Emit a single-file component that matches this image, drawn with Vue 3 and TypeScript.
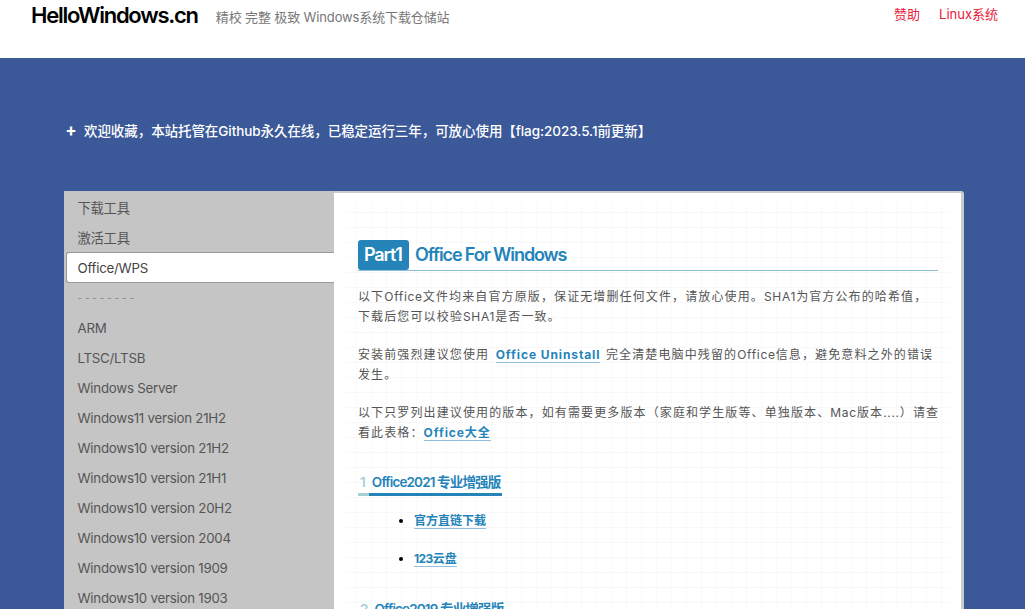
<script setup lang="ts">
const navItems: string[] = [
  '下载工具', '激活工具', 'Office/WPS', '- - - - - - - -', 'ARM', 'LTSC/LTSB', 'Windows Server',
  'Windows11 version 21H2', 'Windows10 version 21H2', 'Windows10 version 21H1',
  'Windows10 version 20H2', 'Windows10 version 2004', 'Windows10 version 1909', 'Windows10 version 1903',
]
</script>

<template>
  <div class="page">
    <header class="top">
      <div class="brand">
        <a class="logo">HelloWindows.cn</a>
        <span class="slogan">精校 完整 极致 Windows系统下载仓储站</span>
      </div>
      <nav class="links">
        <a>赞助</a>
        <a>Linux系统</a>
      </nav>
    </header>
    <main class="hero">
      <p class="notice"><span class="plus">✚</span>欢迎收藏，本站托管在Github永久在线，已稳定运行三年，可放心使用【flag:2023.5.1前更新】</p>
      <section class="panel">
        <aside class="side">
          <a
            v-for="item in navItems"
            :key="item"
            class="item"
            :class="{ active: item === 'Office/WPS', sep: item.startsWith('-') }"
          >{{ item }}</a>
        </aside>
        <article class="content">
          <div class="grid">
            <h2 class="part"><span class="tag">Part1</span><span class="ptitle">Office For Windows</span></h2>
            <p>以下<span class="en">Office</span>文件均来自官方原版，保证无增删任何文件，请放心使用。<span class="en">SHA1</span>为官方公布的哈希值，<br>下载后您可以校验<span class="en">SHA1</span>是否一致。</p>
            <p>安装前强烈建议您使用 <a class="lnk inl">Office Uninstall</a> 完全清楚电脑中残留的<span class="en">Office</span>信息，避免意料之外的错误发生。</p>
            <p>以下只罗列出建议使用的版本，如有需要更多版本（家庭和学生版等、单独版本、<span class="en">Mac</span>版本<span class="en">....</span>）请查看此表格：<a class="lnk">Office大全</a></p>
            <h3 class="sub"><span class="num">1</span><span class="stitle">Office2021 专业增强版</span></h3>
            <ul>
              <li><a class="lnk small">官方直链下载</a></li>
              <li><a class="lnk small"><span class="tight">123</span>云盘</a></li>
            </ul>
            <h3 class="sub"><span class="num">2</span><span class="stitle">Office2019 专业增强版</span></h3>
          </div>
        </article>
      </section>
    </main>
  </div>
</template>

<style>
html, body { margin: 0; overflow: hidden; background: #fff; }
</style>

<style scoped>
.page {
  height: 609px;
  overflow: hidden;
  font-family: Inter, "Noto Sans CJK SC", sans-serif;
}
.top {
  height: 58px;
  display: flex;
  justify-content: space-between;
  background: #fff;
}
.brand { display: flex; align-items: flex-start; padding-left: 31px; }
.logo {
  font-size: 22px;
  line-height: 30px;
  font-weight: 600;
  letter-spacing: -1.25px;
  color: #000;
}
.slogan {
  margin: 2px 0 0 18px;
  font-size: 13px;
  line-height: 30px;
  letter-spacing: -0.13px;
  color: #777;
}
.links { display: flex; gap: 19px; padding: 0 27px 0 0; }
.links a { font-size: 13px; line-height: 29px; color: #e8203a; }
.hero {
  height: 551px;
  background: #3b5998;
  padding-top: 1px;
  box-sizing: border-box;
}
.notice {
  margin: 62px 0 0 66px;
  height: 20px;
  font-size: 13.5px;
  line-height: 20px;
  font-weight: 500;
  letter-spacing: -0.07px;
  color: #fff;
  display: flex;
  align-items: center;
}
.plus { font-size: 10px; width: 18px; }
.panel {
  display: flex;
  margin: 50px 0 0 64px;
  width: 900px;
  box-sizing: border-box;
  height: 440px;
  border-top: 2px solid #ccc;
  border-right: 3px solid #ccc;
  border-radius: 3px 3px 0 0;
  background: #fff;
}
.side {
  flex: 0 0 270px;
  background: #c5c5c5;
  display: flex;
  flex-direction: column;
  margin-top: -2px;
  padding-top: 2px;
}
.item {
  height: 30px;
  line-height: 30px;
  padding-left: 13.5px;
  font-size: 13.3px;
  letter-spacing: -0.25px;
  color: #555;
  flex: none;
  box-sizing: border-box;
}
.item.sep { font-size: 10px; letter-spacing: 0; color: #888; }
.item.active {
  background: #fff;
  color: #444;
  margin: -1px 0 0 2px;
  padding-left: 10.5px;
  border: 1px solid #999;
  border-right: 0;
  border-radius: 3px 0 0 3px;
  height: 31px;
  line-height: 30px;
}
.content { flex: 1; padding: 10px 11px 0 12px; min-width: 0; }
.grid {
  padding: 37px 12px 0 12px;
  height: 500px;
  box-sizing: border-box;
  background-image:
    linear-gradient(#f8f8f8 1px, transparent 1px),
    linear-gradient(90deg, #fafafa 1px, transparent 1px);
  background-size: 15px 15px;
  background-position: 10px 9px;
}
.part {
  margin: 0;
  height: 30px;
  display: flex;
  align-items: stretch;
  border-bottom: 1px solid #8cbfdc;
  font-size: 18px;
  font-weight: 600;
  letter-spacing: -1.1px;
}
.tag {
  background: #2484b9;
  color: #fff;
  border-radius: 3px;
  padding: 0 6px;
  line-height: 29px;
  width: 51px;
  box-sizing: border-box;
  white-space: nowrap;
}
.ptitle { color: #2484b9; margin-left: 6px; line-height: 29px; }
.grid p {
  margin: 0 -3px 19px 0;
  font-size: 12px;
  line-height: 19.5px;
  letter-spacing: 1.12px;
  color: #555;
}
.grid .part + p { margin-top: 16px; }
.en { letter-spacing: 0.7px; }
.lnk {
  color: #2484b9;
  font-weight: 700;
  letter-spacing: 0.9px;
  border-bottom: 1px solid #8fbfdd;
}
.inl { margin: 0 1px 0 2px; }
.sub {
  margin: 28px 0 0;
  height: 23px;
  width: max-content;
  display: flex;
  font-size: 13.5px;
  font-weight: 600;
  line-height: 24px;
  letter-spacing: -0.85px;
  border-bottom: 3px solid #2484b9;
  position: relative;
  padding-right: 2px;
}
.sub::after {
  content: "";
  position: absolute;
  left: 0;
  bottom: -3px;
  width: 11px;
  height: 3px;
  background: #a5d0d3;
}
.num { color: #a5d0d3; padding: 0 7px 0 2px; }
.stitle { color: #2484b9; }
ul { margin: 15px 0 0; padding: 0 0 0 56px; color: #000; }
li { height: 38px; font-size: 12px; line-height: 20px; }
.lnk.small { letter-spacing: 0; }
.tight { letter-spacing: -0.6px; }
.grid .sub:last-child { margin-top: 10px; }
</style>
